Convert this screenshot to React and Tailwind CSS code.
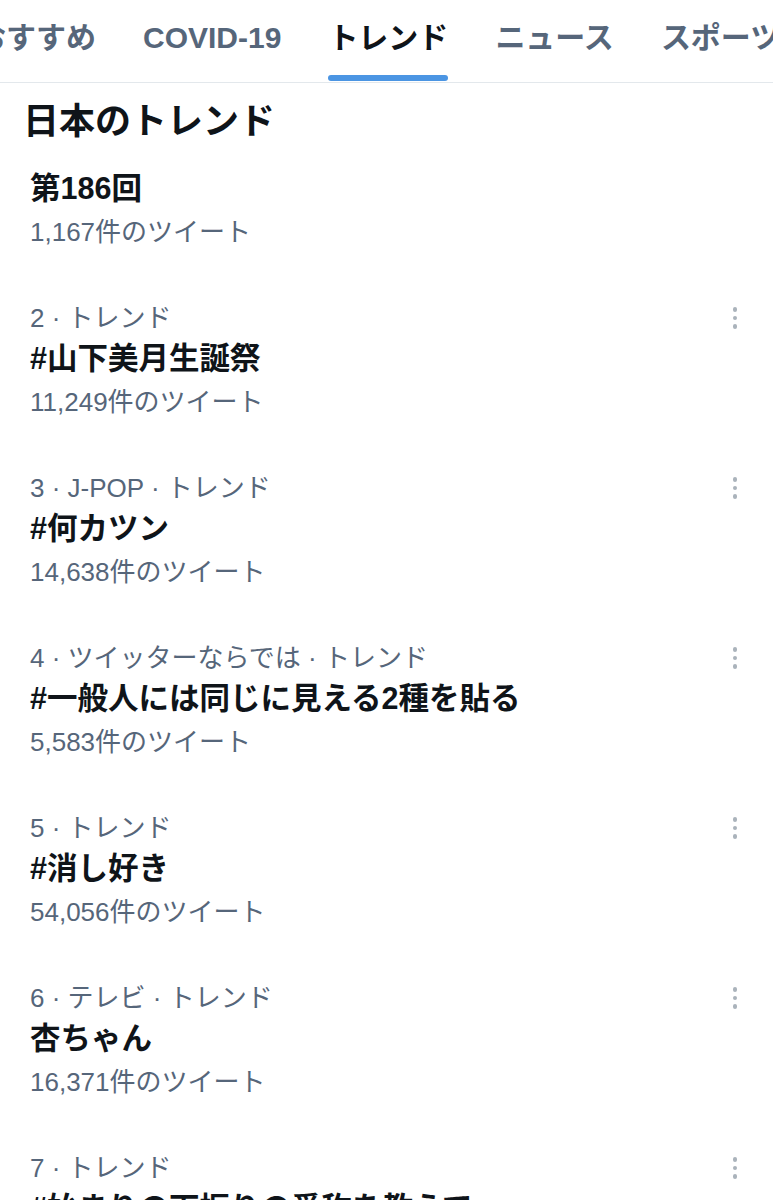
import React from "react";

const tabs = [
  { label: "おすすめ", active: false },
  { label: "COVID-19", active: false },
  { label: "トレンド", active: true },
  { label: "ニュース", active: false },
  { label: "スポーツ", active: false },
];

const trends = [
  { meta: "2 · トレンド", title: "#山下美月生誕祭", count: "11,249件のツイート" },
  { meta: "3 · J-POP · トレンド", title: "#何カツン", count: "14,638件のツイート" },
  { meta: "4 · ツイッターならでは · トレンド", title: "#一般人には同じに見える2種を貼る", count: "5,583件のツイート" },
  { meta: "5 · トレンド", title: "#消し好き", count: "54,056件のツイート" },
  { meta: "6 · テレビ · トレンド", title: "杏ちゃん", count: "16,371件のツイート" },
  { meta: "7 · トレンド", title: "#始まりの下振りの愛称を教えて", count: "" },
];

function Dots() {
  return (
    <div className="flex h-[36px] w-[20px] flex-col items-center justify-center gap-[4px]">
      <span className="block h-[4.5px] w-[4.5px] rounded-full bg-[#aab3bb]" />
      <span className="block h-[4.5px] w-[4.5px] rounded-full bg-[#aab3bb]" />
      <span className="block h-[4.5px] w-[4.5px] rounded-full bg-[#aab3bb]" />
    </div>
  );
}

export default function App() {
  return (
    <div className="h-[1200px] w-[773px] overflow-hidden bg-white font-['Liberation_Sans','Noto_Sans_CJK_JP',sans-serif]">
      <div className="flex h-[83px] overflow-hidden whitespace-nowrap border-b border-[#e3e8ec]">
        <div className="ml-[-24px] flex gap-[47px]">
          {tabs.map((t) => (
            <div key={t.label} className="flex flex-col items-stretch pt-[18px]">
              <span
                className={
                  "text-[30px] font-bold leading-[40px] " +
                  (t.active ? "text-[#0f1419]" : "text-[#56667a]")
                }
              >
                {t.label}
              </span>
              <div
                className={
                  "mt-[17px] h-[6px] rounded-full " +
                  (t.active ? "bg-[#4b95e3]" : "bg-transparent")
                }
              />
            </div>
          ))}
        </div>
      </div>

      <div className="pl-[23px] pt-[15px]">
        <h2 className="text-[36px] font-bold leading-[48px] text-[#0f1419]">日本のトレンド</h2>
      </div>

      <div className="pl-[30px] pb-[23px] pt-[20px]">
        <div className="text-[30.5px] font-bold leading-[44px] text-[#0f1419]">第186回</div>
        <div className="text-[26px] leading-[44px] text-[#56667a]">1,167件のツイート</div>
      </div>

      {trends.map((t) => (
        <div key={t.meta} className="flex py-[23px] pl-[30px] pr-[28px]">
          <div className="flex-1 whitespace-nowrap">
            <div className="text-[26px] leading-[36px] text-[#56667a]">{t.meta}</div>
            <div className="text-[30.5px] font-bold leading-[44px] text-[#0f1419]">{t.title}</div>
            <div className="text-[26px] leading-[44px] text-[#56667a]">{t.count}</div>
          </div>
          <Dots />
        </div>
      ))}
    </div>
  );
}
